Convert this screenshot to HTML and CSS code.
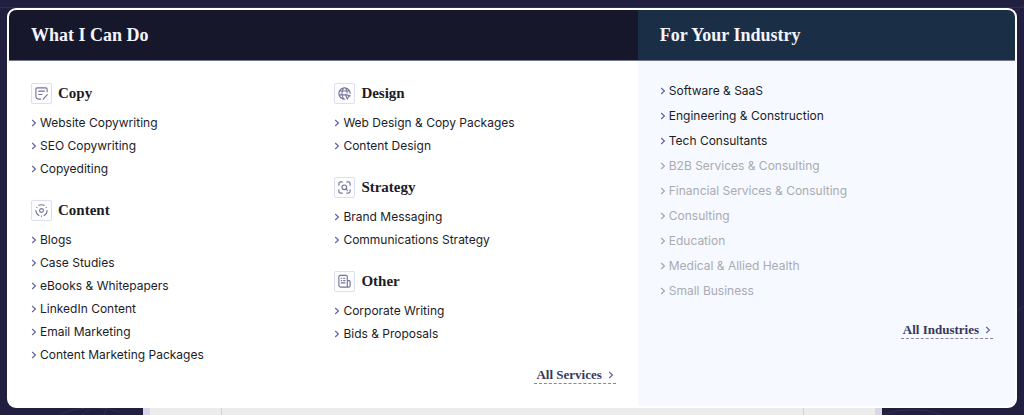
FILE: index.html
```html
<!DOCTYPE html>
<html lang="en">
<head>
<meta charset="utf-8">
<meta name="viewport" content="width=device-width, initial-scale=1">
<title>Services menu</title>
<link rel="stylesheet" href="styles.css">
</head>
<body>
<svg class="symbols" aria-hidden="true">
  <symbol id="chev" viewBox="0 0 6 8"><path d="M1.2 1 4.4 4 1.2 7"/></symbol>
</svg>
<svg class="backdrop" viewBox="0 0 1024 415" preserveAspectRatio="none" aria-hidden="true">
  <path d="M0 7.500H1024M1010 15 1024 5M1016 312 1024 306M60 414Q90 402 120 412M82 415 94 406M104 415 108 406M885 414Q912 405 940 414"/>
</svg>
<nav class="menu" aria-label="Main menu">
  <section class="services">
    <h2 class="title">What I Can Do</h2>
    <div class="services-body">
      <div class="columns">
        <div class="column">
          <section>
            <h3 class="group-title"><span class="icon"><svg viewBox="0 0 16 16"><path d="M14 6V3.500Q14 2 12.500 2H3.500Q2 2 2 3.500V10.500Q2 14 5 14H7M5 5.500H11M5 9H8.500M9.800 14 14.200 9.300"/></svg></span>Copy</h3>
            <ul class="links">
              <li><a href="#"><svg class="chev"><use href="#chev"/></svg>Website Copywriting</a></li>
              <li><a href="#"><svg class="chev"><use href="#chev"/></svg>SEO Copywriting</a></li>
              <li><a href="#"><svg class="chev"><use href="#chev"/></svg>Copyediting</a></li>
            </ul>
          </section>
          <section>
            <h3 class="group-title"><span class="icon"><svg viewBox="0 0 16 16"><circle cx="8" cy="8" r="2"/><path d="M5.200 2.500Q8 1.200 10.800 2.500M2 8Q2.200 11.800 5.200 13.300M14 8Q13.800 11.800 10.800 13.300M3 4.500V4.700M13 4.500V4.700M8 14V14.200"/></svg></span>Content</h3>
            <ul class="links">
              <li><a href="#"><svg class="chev"><use href="#chev"/></svg>Blogs</a></li>
              <li><a href="#"><svg class="chev"><use href="#chev"/></svg>Case Studies</a></li>
              <li><a href="#"><svg class="chev"><use href="#chev"/></svg>eBooks &amp; Whitepapers</a></li>
              <li><a href="#"><svg class="chev"><use href="#chev"/></svg>LinkedIn Content</a></li>
              <li><a href="#"><svg class="chev"><use href="#chev"/></svg>Email Marketing</a></li>
              <li><a href="#"><svg class="chev"><use href="#chev"/></svg>Content Marketing Packages</a></li>
            </ul>
          </section>
        </div>
        <div class="column">
          <section>
            <h3 class="group-title"><span class="icon"><svg viewBox="0 0 16 16"><path d="M14 8A6 6 0 1 0 8 14M2.800 5.300H13.200M2.200 9.500H8M7 2Q3.500 8 7 14M9 2Q11 5 10.800 7.500M9 9 14 10.500 12 11.800 11 14Z"/></svg></span>Design</h3>
            <ul class="links">
              <li><a href="#"><svg class="chev"><use href="#chev"/></svg>Web Design &amp; Copy Packages</a></li>
              <li><a href="#"><svg class="chev"><use href="#chev"/></svg>Content Design</a></li>
            </ul>
          </section>
          <section>
            <h3 class="group-title"><span class="icon"><svg viewBox="0 0 16 16"><circle cx="7.800" cy="7.800" r="2.500"/><path d="M9.700 9.700 11.300 11.300M2 5.500V4Q2 2 4 2H5.500M10.500 2H12Q14 2 14 4V5.500M14 10.500V12Q14 14 12 14H10.500M5.500 14H4Q2 14 2 12V10.500"/></svg></span>Strategy</h3>
            <ul class="links">
              <li><a href="#"><svg class="chev"><use href="#chev"/></svg>Brand Messaging</a></li>
              <li><a href="#"><svg class="chev"><use href="#chev"/></svg>Communications Strategy</a></li>
            </ul>
          </section>
          <section>
            <h3 class="group-title"><span class="icon"><svg viewBox="0 0 16 16"><path d="M11 13V3Q11 1.500 9.500 1.500H3.500Q2 1.500 2 3V12Q2 14 4 14H12.500Q14 14 14 12.500V8Q14 7 13 7H11M4.500 4.500H5M7 4.500H8.500M4.500 7H5M7 7H8.500M4.500 9.500H8.500"/></svg></span>Other</h3>
            <ul class="links">
              <li><a href="#"><svg class="chev"><use href="#chev"/></svg>Corporate Writing</a></li>
              <li><a href="#"><svg class="chev"><use href="#chev"/></svg>Bids &amp; Proposals</a></li>
            </ul>
          </section>
        </div>
      </div>
      <a class="all" href="#">All Services<svg class="chev"><use href="#chev"/></svg></a>
    </div>
  </section>
  <section class="industries">
    <h2 class="title">For Your Industry</h2>
    <div class="industries-body">
      <ul class="links roomy">
        <li><a href="#"><svg class="chev"><use href="#chev"/></svg>Software &amp; SaaS</a></li>
        <li><a href="#"><svg class="chev"><use href="#chev"/></svg>Engineering &amp; Construction</a></li>
        <li><a href="#"><svg class="chev"><use href="#chev"/></svg>Tech Consultants</a></li>
        <li class="soon"><a href="#"><svg class="chev"><use href="#chev"/></svg>B2B Services &amp; Consulting</a></li>
        <li class="soon"><a href="#"><svg class="chev"><use href="#chev"/></svg>Financial Services &amp; Consulting</a></li>
        <li class="soon"><a href="#"><svg class="chev"><use href="#chev"/></svg>Consulting</a></li>
        <li class="soon"><a href="#"><svg class="chev"><use href="#chev"/></svg>Education</a></li>
        <li class="soon"><a href="#"><svg class="chev"><use href="#chev"/></svg>Medical &amp; Allied Health</a></li>
        <li class="soon"><a href="#"><svg class="chev"><use href="#chev"/></svg>Small Business</a></li>
      </ul>
      <a class="all" href="#">All Industries<svg class="chev"><use href="#chev"/></svg></a>
    </div>
  </section>
</nav>
<div class="page-card"><div class="page-card-inner"></div></div>
</body>
</html>
```

FILE: styles.css
```css
* { box-sizing: border-box; }

body {
  margin: 0;
  min-height: 100vh;
  padding: 8px 7px 0;
  display: flex;
  flex-direction: column;
  background: #211f40;
  color: #1c1c28;
  font: 12px/23px Inter, "Liberation Sans", sans-serif;
}

.symbols { position: absolute; width: 0; height: 0; }

.backdrop {
  position: absolute;
  inset: 0;
  width: 100%;
  height: 100%;
  fill: none;
  stroke: #302e50;
  stroke-width: 1;
}

h2, h3, ul { margin: 0; padding: 0; }
a { color: inherit; text-decoration: none; }

.menu {
  position: relative;
  display: grid;
  grid-template-columns: 5fr 3fr;
  border: 2px solid #fff;
  border-radius: 9px;
  background: #fff;
  overflow: hidden;
}

.services, .industries { display: flex; flex-direction: column; }
.industries { background: #f6f9ff; }

.title {
  padding: 0 22px;
  background: #17172c;
  color: #f4f4fc;
  border-bottom: 1px solid #73798a;
  font: bold 18px/50px "Liberation Serif", serif;
}
.industries .title { background: #1a2e46; }

.services-body, .industries-body {
  display: flex;
  flex-direction: column;
  padding: 22px;
}
.industries-body { padding-top: 17px; }

.columns {
  display: grid;
  grid-template-columns: 1fr 1fr;
  gap: 22px;
}

.column { display: flex; flex-direction: column; gap: 20px; }

.group-title {
  display: flex;
  align-items: center;
  gap: 6px;
  margin-bottom: 7px;
  font: bold 15px/21px "Liberation Serif", serif;
}

.icon {
  display: flex;
  align-items: center;
  justify-content: center;
  width: 21px;
  height: 21px;
  border: 1px solid #dedef3;
  border-radius: 2px;
  background: #fdfdff;
}
.icon svg {
  width: 15px;
  height: 15px;
  fill: none;
  stroke: #747398;
  stroke-width: 1.2;
  stroke-linecap: round;
  stroke-linejoin: round;
}

.links { list-style: none; }
.links a { display: flex; align-items: center; gap: 3px; }
.roomy { line-height: 25px; }
.soon { color: #a9abb1; }

.chev {
  width: 6px;
  height: 8px;
  flex: none;
  fill: none;
  stroke: #6363a0;
  stroke-width: 1.2;
}
.soon .chev { stroke: #a3a5ae; }

.all {
  display: flex;
  align-items: center;
  gap: 6px;
  align-self: flex-end;
  padding: 0 2px;
  border-bottom: 1px dashed #8584a5;
  color: #37375c;
  font: bold 13px/17px "Liberation Serif", serif;
}
.industries .all { margin-top: 18px; }

.page-card {
  flex: 1;
  display: flex;
  margin: 0 135px 0 136px;
  padding: 0 7px;
  background: #d6d7e9;
  position: relative;
}
.page-card-inner {
  flex: 1;
  background: linear-gradient(#d0d0d8, #d0d0d8) 71px 0 / 1px 100% no-repeat,
    linear-gradient(#d0d0d8, #d0d0d8) calc(100% - 71px) 0 / 1px 100% no-repeat, #ececec;
}
```
